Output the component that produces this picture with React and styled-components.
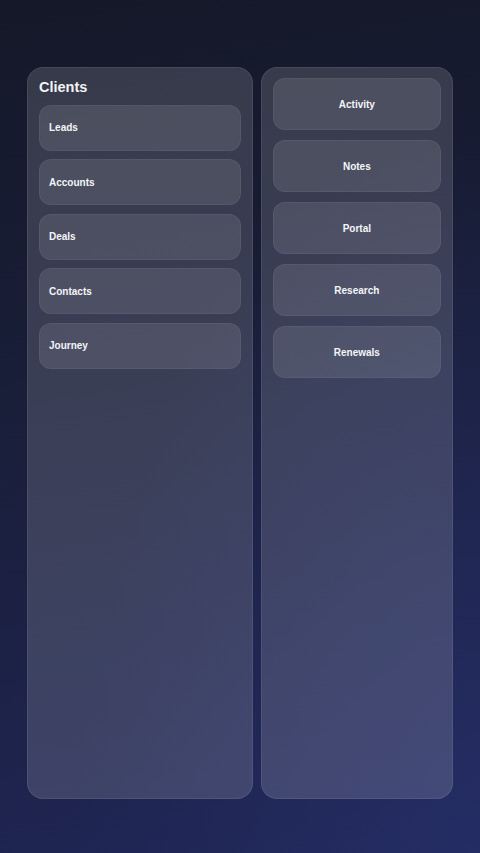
import React from 'react'
import styled, { createGlobalStyle } from 'styled-components'

const GlobalStyle = createGlobalStyle`
    html, body {
        margin: 0;
        padding: 0;
    }
    body {
        font-family: "Liberation Sans", Arial, sans-serif;
        background: #171c33;
    }
`;

const Page = styled.div`
    box-sizing: border-box;
    height: 853px;
    padding: 67px 27px 54px;
    display: grid;
    grid-template-columns: 54fr 46fr;
    gap: 8px;
    background:
        radial-gradient(ellipse at 100% 100%, rgba(40, 50, 110, 0.6), transparent 60%),
        linear-gradient(170deg, #141828 0%, #1a1f3c 50%, #1f2655 100%);
`;

const Panel = styled.section`
    box-sizing: border-box;
    display: flex;
    flex-direction: column;
    gap: ${({ $gap }) => $gap}px;
    padding: 10px 11px 11px;
    border-radius: 16px;
    background: rgba(255, 255, 255, 0.145);
    border: 1px solid rgba(255, 255, 255, 0.08);
`;

const Title = styled.h2`
    margin: 0;
    font-size: 14.5px;
    line-height: 18px;
    font-weight: 700;
    color: #f2f3f7;
`;

const Item = styled.div`
    box-sizing: border-box;
    display: flex;
    align-items: center;
    justify-content: ${({ $center }) => ($center ? 'center' : 'flex-start')};
    height: ${({ $h }) => $h}px;
    padding: 0 9px;
    border-radius: 12px;
    background: rgba(255, 255, 255, 0.1);
    border: 1px solid rgba(255, 255, 255, 0.05);
    color: #f4f5f8;
    font-size: 10px;
    font-weight: 700;
`;

const clients = ['Leads', 'Accounts', 'Deals', 'Contacts', 'Journey']
const tools = ['Activity', 'Notes', 'Portal', 'Research', 'Renewals']

const App = () => {
    return (
        <>
            <GlobalStyle />
            <Page>
                <Panel $gap={8.5}>
                    <Title>Clients</Title>
                    {clients.map((c) => (
                        <Item key={c} $h={46}>{c}</Item>
                    ))}
                </Panel>
                <Panel $gap={10}>
                    {tools.map((t) => (
                        <Item key={t} $h={52} $center>{t}</Item>
                    ))}
                </Panel>
            </Page>
        </>
    )
}

export default App
